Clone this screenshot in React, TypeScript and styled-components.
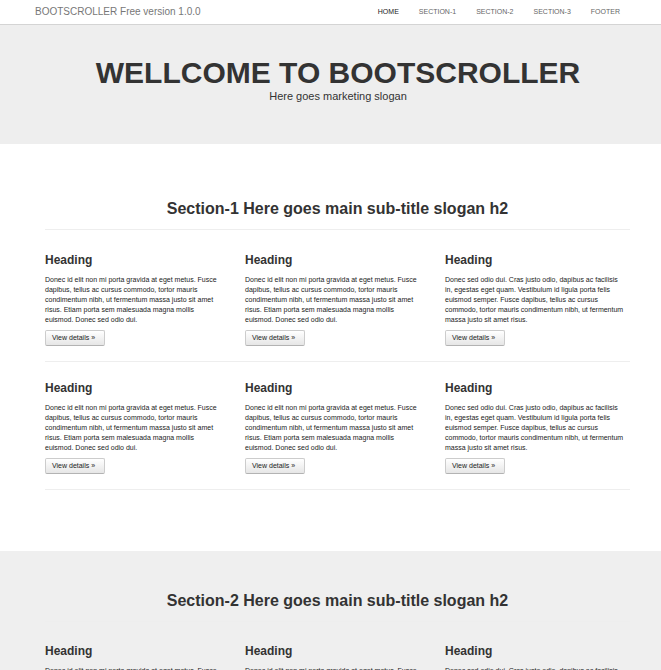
import React from "react";
import styled, { createGlobalStyle } from "styled-components";

const GlobalStyle = createGlobalStyle`
  * { box-sizing: border-box; }
  html { scrollbar-width: none; }
  body {
    margin: 0;
    background: #fff;
    color: #333;
    font: 7px/10px "Liberation Sans", Arial, sans-serif;
  }
`;

const Navbar = styled.header`
  display: flex;
  justify-content: space-between;
  align-items: center;
  height: 25px;
  padding: 0 31px 0 35px;
  background: #fff;
  border-bottom: 1px solid #d4d4d4;
`;

const Brand = styled.a`
  font-size: 10px;
  color: #777;
  text-decoration: none;
`;

const NavLinks = styled.nav`
  display: flex;
`;

const NavLink = styled.a<{ $active?: boolean }>`
  padding: 0 10px;
  font-size: 7px;
  color: ${(p) => (p.$active ? "#222" : "#666")};
  text-decoration: none;
`;

const Hero = styled.section`
  padding: 31px 0 42px 15px;
  background: #eee;
  text-align: center;
`;

const HeroTitle = styled.h1`
  margin: 0;
  font-size: 30px;
  line-height: 34px;
`;

const Slogan = styled.p`
  margin: 0;
  font-size: 11px;
  line-height: 12px;
`;

const Section = styled.section<{ $shaded?: boolean }>`
  padding: ${(p) => (p.$shaded ? "38px" : "53px")} 31px 61px 45px;
  background: ${(p) => (p.$shaded ? "#efefef" : "#fff")};
`;

const SectionTitle = styled.h2<{ $compact?: boolean }>`
  margin: 0 0 ${(p) => (p.$compact ? "19px" : "20px")};
  padding-bottom: 9px;
  border-bottom: 1px solid #eee;
  font-size: 16px;
  line-height: 23px;
  text-align: center;
`;

const Row = styled.div`
  display: grid;
  grid-template-columns: repeat(3, 1fr);
  column-gap: 15px;
  padding-bottom: 15px;
  margin-bottom: 16px;
  border-bottom: 1px solid #eee;
  &:last-child { margin-bottom: 0; }
`;

const CardTitle = styled.h3`
  margin: 0 0 5px;
  font-size: 12px;
  line-height: 20px;
`;

const CardText = styled.p`
  margin: 0 0 5px;
  padding-right: 6px;
  color: #222;
`;

const DetailsLink = styled.a`
  display: inline-block;
  min-width: 60px;
  padding: 2px 6px;
  border: 1px solid #ccc;
  border-bottom-color: #b3b3b3;
  border-radius: 2px;
  background: linear-gradient(#fff, #e6e6e6);
  color: #222;
  text-decoration: none;
`;

const donec =
  "Donec id elit non mi porta gravida at eget metus. Fusce dapibus, tellus ac cursus commodo, tortor mauris condimentum nibh, ut fermentum massa justo sit amet risus. Etiam porta sem malesuada magna mollis euismod. Donec sed odio dui.";
const cras =
  "Donec sed odio dui. Cras justo odio, dapibus ac facilisis in, egestas eget quam. Vestibulum id ligula porta felis euismod semper. Fusce dapibus, tellus ac cursus commodo, tortor mauris condimentum nibh, ut fermentum massa justo sit amet risus.";

const CardRow = () => (
  <Row>
    {[donec, donec, cras].map((text, i) => (
      <article key={i}>
        <CardTitle>Heading</CardTitle>
        <CardText>{text}</CardText>
        <DetailsLink href="#">View details »</DetailsLink>
      </article>
    ))}
  </Row>
);

export default function App() {
  return (
    <>
      <GlobalStyle />
      <Navbar>
        <Brand href="#">BOOTSCROLLER Free version 1.0.0</Brand>
        <NavLinks>
          <NavLink href="#home" $active>HOME</NavLink>
          <NavLink href="#section-1">SECTION-1</NavLink>
          <NavLink href="#section-2">SECTION-2</NavLink>
          <NavLink href="#section-3">SECTION-3</NavLink>
          <NavLink href="#footer">FOOTER</NavLink>
        </NavLinks>
      </Navbar>
      <Hero id="home">
        <HeroTitle>WELLCOME TO BOOTSCROLLER</HeroTitle>
        <Slogan>Here goes marketing slogan</Slogan>
      </Hero>
      <Section id="section-1">
        <SectionTitle>Section-1 Here goes main sub-title slogan h2</SectionTitle>
        <CardRow />
        <CardRow />
      </Section>
      <Section id="section-2" $shaded>
        <SectionTitle $compact>Section-2 Here goes main sub-title slogan h2</SectionTitle>
        <CardRow />
      </Section>
    </>
  );
}
